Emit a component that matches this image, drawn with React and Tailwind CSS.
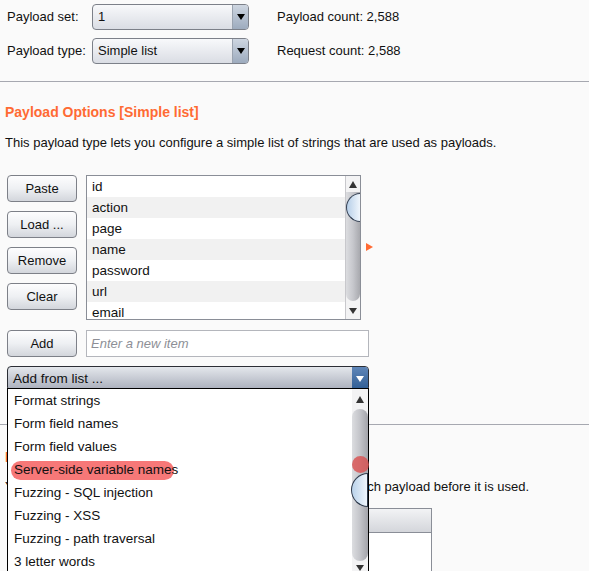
const Tri = ({ dir = 'down', color = 'border-t-black' }) =>
  dir === 'down' ? (
    <div className={`h-0 w-0 border-x-[4px] border-t-[6px] border-x-transparent ${color}`} />
  ) : (
    <div className="h-0 w-0 border-x-[4px] border-b-[7px] border-x-transparent border-b-[#333]" />
  );

const Select = ({ value }) => (
  <div className="flex h-[26px] w-[157px] overflow-hidden rounded-[4px] border border-[#7c8089] bg-gradient-to-b from-[#f8f9fb] to-[#dadde4]">
    <div className="flex-1 pl-[5px] leading-[24px]">{value}</div>
    <div className="flex w-[16px] items-center justify-center border-l border-[#9aa3b0] bg-gradient-to-b from-[#ced6e1] to-[#9dabbe]">
      <Tri />
    </div>
  </div>
);

const Btn = ({ children }) => (
  <div className="flex h-[27px] w-[70px] items-center justify-center rounded-[4px] border border-[#7d8088] bg-gradient-to-b from-[#fdfdfe] via-[#eef0f3] to-[#d3d6dc]">
    {children}
  </div>
);

const listItems = ['id', 'action', 'page', 'name', 'password', 'url', 'email'];

const popupItems = [
  'Format strings',
  'Form field names',
  'Form field values',
  'Server-side variable names',
  'Fuzzing - SQL injection',
  'Fuzzing - XSS',
  'Fuzzing - path traversal',
  '3 letter words',
];

export default function App() {
  return (
    <div className="relative h-[571px] w-[589px] overflow-hidden bg-[#fafafa] font-['Liberation_Sans',Arial,sans-serif] text-[13px] text-[#111]">
      {/* Payload set / type */}
      <div className="pt-[4px]">
        <div className="flex h-[26px] items-center">
          <div className="w-[92px] pl-[7px]">Payload set:</div>
          <Select value="1" />
          <div className="pl-[28px]">Payload count: 2,588</div>
        </div>
        <div className="mt-[8px] flex h-[26px] items-center">
          <div className="w-[92px] pl-[7px]">Payload type:</div>
          <Select value="Simple list" />
          <div className="pl-[28px]">Request count: 2,588</div>
        </div>
      </div>
      <div className="mt-[17px] h-px bg-[#a6a8b0]" />

      {/* Payload options */}
      <div className="mt-[22px] pl-[5px] text-[14px] leading-[17px] font-bold text-[#ff6a33]">Payload Options [Simple list]</div>
      <div className="mt-[14px] pl-[5px] leading-[16px]">This payload type lets you configure a simple list of strings that are used as payloads.</div>

      <div className="mt-[24px] flex pl-[7px]">
        <div className="flex flex-col gap-[9px]">
          <Btn>Paste</Btn>
          <Btn>Load ...</Btn>
          <Btn>Remove</Btn>
          <Btn>Clear</Btn>
        </div>
        <div className="ml-[9px] flex h-[145px] w-[275px] overflow-hidden border border-[#8a8e97] bg-white">
          <div className="flex-1">
            {listItems.map((t, i) => (
              <div key={t} className={`h-[21px] pl-[5px] text-[13.5px] leading-[21px] ${i % 2 ? 'bg-[#f1f1f1]' : 'bg-white'}`}>
                {t}
              </div>
            ))}
          </div>
          <div className="relative w-[15px] border-l border-[#c8c8cc] bg-[#f3f3f4]">
            <div className="flex h-[16px] items-center justify-center"><Tri dir="up" /></div>
            <div className="absolute left-0 right-0 top-[16px] bottom-[18px] rounded-b-[7px] bg-gradient-to-r from-[#dcdde0] via-[#c6c7cc] to-[#a8a9ae]" />
            <div className="absolute left-0 right-[-1px] top-[17px] h-[29px] rounded-l-full border border-[#3a4658] bg-gradient-to-r from-[#b7cfe8] to-[#f0f6fc]" />
            <div className="absolute bottom-0 left-0 right-0 flex h-[16px] items-center justify-center">
              <Tri color="border-t-[#333]" />
            </div>
          </div>
        </div>
        <div className="ml-[5px] mt-[68px] h-0 w-0 border-y-[4px] border-l-[7px] border-y-transparent border-l-[#ff6a33]" />
      </div>

      {/* Add row */}
      <div className="mt-[10px] flex items-center pl-[7px]">
        <Btn>Add</Btn>
        <div className="ml-[9px] h-[27px] w-[283px] border border-[#b4b6bc] bg-white pl-[4px] leading-[25px] italic text-[#8d8f96]">Enter a new item</div>
      </div>

      {/* Add from list combo */}
      <div className="ml-[7px] mt-[9px] flex h-[25px] w-[362px] overflow-hidden rounded-[4px] border border-[#2b2e35] bg-gradient-to-b from-[#e4e7ec] to-[#a9aebb]">
        <div className="flex-1 pl-[5px] text-[13.5px] leading-[23px]">Add from list ...</div>
        <div className="flex w-[16px] items-center justify-center bg-gradient-to-b from-[#5f86b8] to-[#2f5d94]">
          <Tri color="border-t-white" />
        </div>
      </div>

      {/* next section, partly under the popup */}
      <div className="mt-[33px] h-px bg-[#a6a8b0]" />
      <div className="mt-[24px] pl-[5px] text-[14px] leading-[17px] font-bold text-[#ff6a33]">Payload Processing</div>
      <div className="mt-[13px] pl-[5px] leading-[16px]">You can define rules to perform various processing tasks on each payload before it is used.</div>
      <div className="ml-[86px] mt-[13px] w-[346px]">
        <div className="h-[25px] border border-[#8a8e97] bg-gradient-to-b from-[#f2f3f5] to-[#d4d6db]" />
        <div className="h-[60px] border-x border-[#8a8e97] bg-white" />
      </div>

      {/* dropdown popup */}
      <div className="absolute left-[7px] top-[388px] flex h-[190px] w-[362px] border border-black bg-white">
        <div className="relative flex-1">
          {popupItems.map((t, i) => (
            <div key={t} className="relative h-[23px] pl-[6px] text-[13.5px] leading-[23px]">
              {i === 3 && <div className="absolute left-[3px] top-[3px] h-[19px] w-[163px] rounded-full bg-[#f77878]" />}
              <span className="relative">{t}</span>
            </div>
          ))}
        </div>
        <div className="relative w-[16px] bg-[#f3f3f4]">
          <div className="flex h-[20px] items-center justify-center"><Tri dir="up" /></div>
          <div className="absolute left-0 right-0 top-[20px] bottom-[16px] rounded-t-[8px] rounded-b-[8px] bg-gradient-to-r from-[#dcdde0] via-[#c3c4c9] to-[#a3a4aa]" />
          <div className="absolute left-[-1px] right-0 top-[84px] h-[34px] rounded-l-full border border-[#2f3a4b] bg-gradient-to-r from-[#b9d2ea] to-[#f0f6fc]" />
          <div className="absolute left-0 top-[67px] h-[17px] w-[17px] rounded-full bg-[#d94f4f]/80" />
          <div className="absolute bottom-0 left-0 right-0 flex h-[12px] items-start justify-center">
            <Tri color="border-t-[#333]" />
          </div>
        </div>
      </div>
    </div>
  );
}
